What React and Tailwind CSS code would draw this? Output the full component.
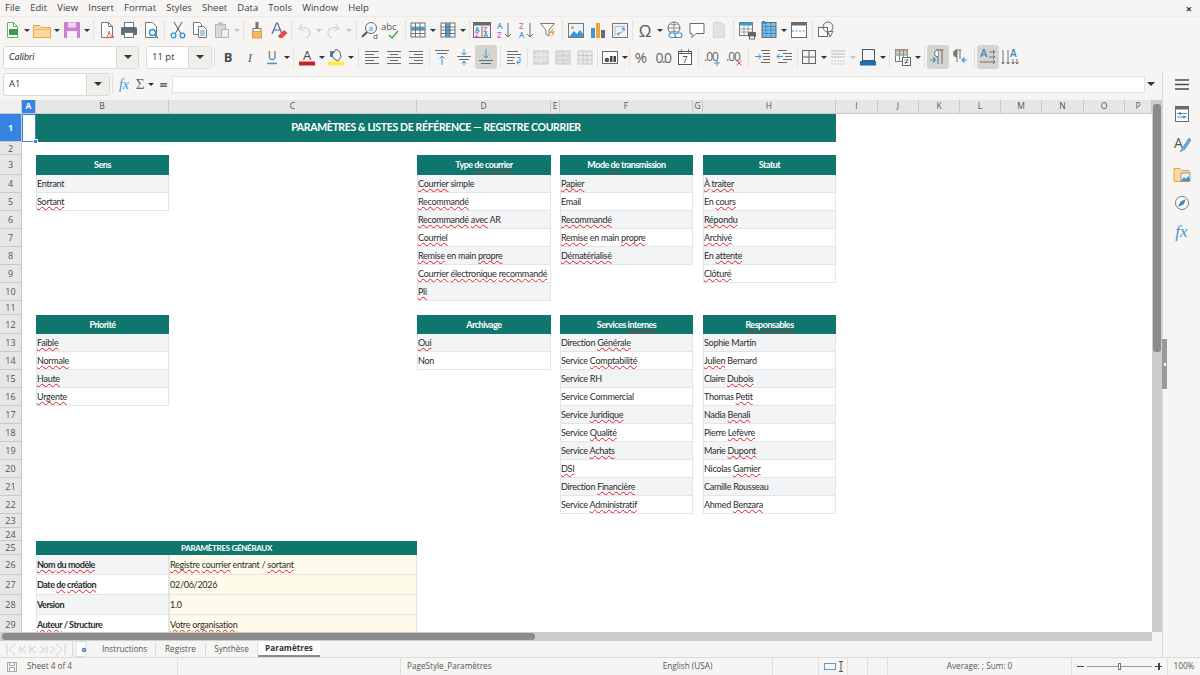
import React from 'react';

const menus = ['File', 'Edit', 'View', 'Insert', 'Format', 'Styles', 'Sheet', 'Data', 'Tools', 'Window', 'Help'];

const colHeaders = [
  ['A', 2], ['B', 3], ['C', 4], ['D', 5], ['E', 6], ['F', 7], ['G', 8], ['H', 9],
  ['I', 10], ['J', 11], ['K', 12], ['L', 13], ['M', 14], ['N', 15], ['O', 16], ['P', 17],
];

// ~word~ gets the red spell check line
const tables = [
  { col: 3, row: 3, title: 'Sens', items: ['Entrant', '~Sortant~'] },
  { col: 5, row: 3, title: 'Type ~de~ ~courrier~', items: ['~Courrier~ simple', '~Recommandé~', '~Recommandé~ ~avec~ AR', '~Courriel~', '~Remise~ en main ~propre~', '~Courrier~ ~électronique~ ~recommandé~', '~Pli~'] },
  { col: 7, row: 3, title: 'Mode ~de~ transmission', items: ['~Papier~', 'Email', '~Recommandé~', '~Remise~ en main ~propre~', '~Dématérialisé~'] },
  { col: 9, row: 3, title: 'Statut', items: ['~À~ ~traiter~', 'En ~cours~', '~Répondu~', '~Archivé~', 'En ~attente~', '~Clôturé~'] },
  { col: 3, row: 12, title: 'Priorité', items: ['~Faible~', '~Normale~', '~Haute~', '~Urgente~'] },
  { col: 5, row: 12, title: 'Archivage', items: ['~Oui~', 'Non'] },
  { col: 7, row: 12, title: 'Services ~internes~', items: ['Direction ~Générale~', 'Service ~Comptabilité~', 'Service RH', 'Service Commercial', 'Service ~Juridique~', 'Service ~Qualité~', 'Service ~Achats~', '~DSI~', 'Direction ~Financière~', 'Service ~Administratif~'] },
  { col: 9, row: 12, title: '~Responsables~', items: ['Sophie Martin', '~Julien~ Bernard', 'Claire ~Dubois~', 'Thomas ~Petit~', 'Nadia ~Benali~', 'Pierre ~Lefèvre~', 'Marie ~Dupont~', 'Nicolas ~Garnier~', 'Camille Rousseau', 'Ahmed ~Benzara~'] },
];

const params = [
  ['~Nom~ ~du~ ~modèle~', '~Registre~ ~courrier~ entrant / ~sortant~'],
  ['Date ~de~ ~création~', '02/06/2026'],
  ['Version', '1.0'],
  ['~Auteur~ / Structure', '~Votre~ ~organisation~'],
];

const Spell = ({ text }) => (
  <span>
    {text.split('~').map((part, i) =>
      i % 2 ? (
        <span key={i} className="underline decoration-wavy decoration-[#e01b24] decoration-[0.7px] underline-offset-[1px]">{part}</span>
      ) : (
        <span key={i}>{part}</span>
      )
    )}
  </span>
);

const G = ({ children }) => <g strokeWidth="1" fill="none">{children}</g>;

const lines = (xs, c = '#6b6b6b') => xs.map(([x1, y, x2], i) => <path key={i} d={`M${x1} ${y}H${x2}`} stroke={c} />);

const icons = {
  new: <G><path d="M6.5 3.5h6l4 4v11h-10z" fill="#fff" stroke="#5cb85c" /><rect x="8" y="10" width="9" height="6" fill="#3f9b4c" /><path d="M12.5 3.5v4h4" stroke="#5cb85c" /></G>,
  open: <G><path d="M2.5 6.5h6l2 2h9v10h-17z" fill="#fbd89f" stroke="#eea23f" /><path d="M2.5 10.5h17" stroke="#f5b65e" /></G>,
  save: <G><rect x="3" y="3" width="16" height="16" rx="1" fill="#c97fce" /><rect x="7" y="3.5" width="8" height="5" fill="#f3d9f4" /><rect x="6" y="12" width="10" height="7" fill="#f8eff8" /></G>,
  pdf: <G><path d="M5.5 3.5h7l4 4v11h-11z" fill="#fff" stroke="#777" /><path d="M12.5 3.5v4h4" stroke="#777" /><path d="M10 19c2-2 3-5 3-7 0 3 2 5 5 6-3 0-5 0-8 1z" stroke="#e0564f" /></G>,
  print: <G><rect x="6.5" y="3.5" width="9" height="5" fill="#fff" stroke="#6d7b86" /><rect x="3" y="8" width="16" height="8" rx="1.5" fill="#5f6d78" /><rect x="6.5" y="13.5" width="9" height="5" fill="#fff" stroke="#6d7b86" /></G>,
  preview: <G><path d="M5.5 3.5h7l4 4v11h-11z" fill="#fff" stroke="#777" /><circle cx="12.5" cy="13.5" r="3" stroke="#2f8fd0" strokeWidth="1.4" /><path d="M15 16l3 3" stroke="#2f8fd0" strokeWidth="1.5" /></G>,
  cut: <G><path d="M7 3l6.5 11M15 3L8.500 14" stroke="#555" /><circle cx="6.500" cy="16.500" r="2.300" stroke="#2f8fd0" strokeWidth="1.300" /><circle cx="15.500" cy="16.500" r="2.300" stroke="#2f8fd0" strokeWidth="1.300" /></G>,
  copy: <G><path d="M4.500 3.500h6l2 2v10h-8z" fill="#fff" stroke="#777" /><path d="M9.500 7.500h5l3 3v8h-8z" fill="#fff" stroke="#777" /><path d="M11 12h5M11 14h5M11 16h5" stroke="#4a9fd8" /></G>,
  paste: <G><rect x="4.500" y="5.500" width="10" height="13" fill="#d9d9d9" stroke="#b3b3b3" /><rect x="7" y="3.500" width="5" height="3" fill="#bdbdbd" /><rect x="10.500" y="10.500" width="7" height="8" fill="#efefef" stroke="#b3b3b3" /></G>,
  clone: <G><path d="M9.500 3h3v6h-3z" fill="#777" /><path d="M7 9.500h8v3H7z" fill="#f7f7f7" stroke="#777" /><path d="M6.500 12.500h9v6.500h-9z" fill="#f4b766" stroke="#e79a3c" /></G>,
  clear: <G><path d="M4 15l4.500-11h1L14 15M6 11h6" stroke="#3f6f94" strokeWidth="1.200" /><path d="M10 17l6-6 3.500 3-5 5h-3z" fill="#e5484d" /></G>,
  undo: <G><path d="M6 10l3-5M6 10l5 2M6 10c5-3 11-1 11 4 0 3-2 4-4 5" stroke="#d2d2d2" strokeWidth="1.200" /></G>,
  redo: <G><path d="M16 10l-3-5M16 10l-5 2M16 10c-5-3-11-1-11 4 0 3 2 4 4 5" stroke="#d2d2d2" strokeWidth="1.200" /></G>,
  find: <G><circle cx="12" cy="9" r="5.500" stroke="#6b6b6b" /><path d="M8 13l-5 5" stroke="#555" strokeWidth="2" /><text x="9.500" y="11.500" fontSize="8" fill="#2f8fd0" stroke="none" fontFamily="Open Sans">a</text><text x="14" y="20" fontSize="8" fill="#555" stroke="none" fontFamily="Open Sans">d</text></G>,
  spell: <G><text x="0" y="11" fontSize="9.500" fill="#555" stroke="none" fontFamily="Open Sans">abc</text><path d="M8 16l3 3 6-7" stroke="#43a55a" strokeWidth="1.500" /></G>,
  table: <G><rect x="4" y="4" width="14" height="14" fill="#fff" stroke="#6f6f6f" /><rect x="4" y="7.500" width="14" height="3.500" fill="#4ea3dd" /><path d="M4 11h14M4 14.500h14M8.500 4v14M13 4v14" stroke="#6f6f6f" /></G>,
  column: <G><rect x="4" y="4" width="14" height="14" fill="#fff" stroke="#6f6f6f" /><rect x="9" y="4" width="4" height="14" fill="#4ea3dd" /><path d="M4 8h14M4 11h14M4 14.500h14M8.500 4v14M13 4v14" stroke="#6f6f6f" /></G>,
  sort: <G><rect x="2.500" y="3.500" width="17" height="15" stroke="#6b6b6b" /><rect x="2.500" y="3.500" width="17" height="3" fill="#6b6b6b" /><path d="M11 7v11" stroke="#6b6b6b" /><text x="4" y="12.500" fontSize="6.500" fontWeight="700" fill="#3f93d3" stroke="none" fontFamily="Open Sans">A</text><text x="4" y="18" fontSize="6.500" fontWeight="700" fill="#d767cf" stroke="none" fontFamily="Open Sans">Z</text><text x="12.500" y="12.500" fontSize="6.500" fontWeight="700" fill="#d767cf" stroke="none" fontFamily="Open Sans">Z</text><text x="12.500" y="18" fontSize="6.500" fontWeight="700" fill="#3f93d3" stroke="none" fontFamily="Open Sans">A</text></G>,
  az: <G><text x="4" y="10" fontSize="8" fontWeight="600" fill="#3f93d3" stroke="none" fontFamily="Open Sans">A</text><text x="4" y="18.500" fontSize="8" fontWeight="600" fill="#d767cf" stroke="none" fontFamily="Open Sans">Z</text><path d="M15 4v14M12 15l3 3 3-3" stroke="#6b6b6b" /></G>,
  za: <G><text x="4" y="10" fontSize="8" fontWeight="600" fill="#d767cf" stroke="none" fontFamily="Open Sans">Z</text><text x="4" y="18.500" fontSize="8" fontWeight="600" fill="#3f93d3" stroke="none" fontFamily="Open Sans">A</text><path d="M15 4v14M12 15l3 3 3-3" stroke="#6b6b6b" /></G>,
  filter: <G><path d="M3.500 4.500h14l-5.500 6.500v6l-3-2v-4z" fill="#fff" stroke="#777" /><path d="M16 9l-3.500 5h3l-1.500 5 4-6.500h-2.500z" fill="#f0a33b" /></G>,
  image: <G><rect x="3.500" y="4.500" width="15" height="14" fill="#eaf4fb" stroke="#777" /><circle cx="7.500" cy="8.500" r="1.500" fill="#f2a53b" /><path d="M4 18l5-6 3 3 3-4 3 4v3z" fill="#3e96d6" /></G>,
  chart: <G><rect x="4" y="9" width="4" height="10" fill="#3e96d6" /><rect x="9" y="4" width="4" height="15" fill="#f0a33b" /><rect x="14" y="11" width="4" height="8" fill="#6b6b6b" /></G>,
  pivot: <G><rect x="3.500" y="4.500" width="15" height="14" fill="#f3f3f3" stroke="#777" /><path d="M6 7.500h10M6 7.500v9" stroke="#b5b5b5" /><path d="M8 15c3 0 6-2 7-6M15 9l-2.500 1M15 9l.5 2.500M8 15l2.500-1.500M8 15l2 1.500" stroke="#3e96d6" /></G>,
  omega: <G><text x="11" y="18" textAnchor="middle" fontSize="17" fill="#5f5f5f" stroke="none" fontFamily="Liberation Sans">Ω</text></G>,
  link: <G><circle cx="10" cy="9" r="6" stroke="#6b6b6b" /><path d="M4 9h12M10 3v12M6 5c2 1 6 1 8 0M6 13c2-1 6-1 8 0" stroke="#6b6b6b" strokeWidth=".7" /><rect x="5" y="14" width="7" height="4.500" rx="2.200" fill="#fff" stroke="#3e96d6" strokeWidth="1.200" /><rect x="11" y="14" width="7" height="4.500" rx="2.200" fill="#fff" stroke="#3e96d6" strokeWidth="1.200" /></G>,
  comment: <G><path d="M4 4.500h14v10H10l-4 4v-4H4z" fill="#fff" stroke="#6b6b6b" /></G>,
  note: <G><path d="M5.500 3.500h8l3 3v12h-11z" fill="#e2e2e2" stroke="#d5d5d5" /></G>,
  headers: <G><rect x="3.500" y="3.500" width="13" height="13" fill="#fff" stroke="#777" /><rect x="3.500" y="3.500" width="13" height="3" fill="#3e96d6" /><path d="M3.500 10h13M3.500 13h13M8 6v11M12 6v11" stroke="#9a9a9a" /><rect x="12" y="13" width="8" height="5" rx="1" fill="#666" /><rect x="13.500" y="17" width="5" height="3" fill="#fff" stroke="#666" /></G>,
  freeze: <G><rect x="4" y="3.500" width="14" height="15" fill="#7dbbe6" stroke="#5f6d78" /><path d="M4 7.500h14M4 11h14M4 14.500h14M8 3.500v15M13 3.500v15" stroke="#2f6f9f" strokeDasharray="1.500 1" /><rect x="4" y="2" width="3" height="3" fill="#2f8fd0" /></G>,
  split: <G><rect x="3.500" y="3.500" width="15" height="15" fill="#fff" stroke="#6b6b6b" /><rect x="3.500" y="3.500" width="15" height="3" fill="#6b6b6b" /><path d="M4 12h14" stroke="#3e96d6" strokeDasharray="2 1.500" /></G>,
  shapes: <G><rect x="3.500" y="8.500" width="9" height="9" fill="#fff" stroke="#6b6b6b" /><circle cx="13" cy="8" r="5" stroke="#6b6b6b" /><path d="M13 13l5-1-3 6z" fill="#fff" stroke="#6b6b6b" /></G>,
  bold: <text x="11" y="16" textAnchor="middle" fontSize="13" fontWeight="700" fill="#4d4d4d" fontFamily="Open Sans">B</text>,
  italic: <text x="11" y="16" textAnchor="middle" fontSize="13" fontStyle="italic" fill="#5f5f5f" fontFamily="Liberation Serif">I</text>,
  under: <G><text x="11" y="14" textAnchor="middle" fontSize="12" fill="#5f5f5f" fontFamily="Open Sans">U</text><path d="M6 17.500h10" stroke="#3e96d6" strokeWidth="1.500" /></G>,
  fontColor: <G><text x="11" y="14" textAnchor="middle" fontSize="13" fill="#444" fontFamily="Open Sans">A</text><rect x="3" y="15.500" width="16" height="4" fill="#c9211e" /></G>,
  bgColor: <G><rect x="5" y="5" width="6" height="6" fill="#3e7fb5" /><path d="M11 3l4 3 1 5-3 4-4-2-2-4z" fill="#f6f6f6" stroke="#666" /><rect x="3" y="15.500" width="16" height="4" fill="#ffeb3b" /></G>,
  left: <G>{lines([[4, 5.5, 18], [4, 8.5, 13], [4, 11.5, 18], [4, 14.5, 13], [4, 17.5, 18]])}</G>,
  center: <G>{lines([[4, 5.5, 18], [7, 8.5, 15], [4, 11.5, 18], [7, 14.5, 15], [4, 17.5, 18]])}</G>,
  right: <G>{lines([[4, 5.5, 18], [9, 8.5, 18], [4, 11.5, 18], [9, 14.5, 18], [4, 17.5, 18]])}</G>,
  top: <G>{lines([[4, 4.5, 18], [6, 7.5, 16]])}<path d="M11 19v-9M8.500 12.500L11 10l2.500 2.500" stroke="#3e96d6" /></G>,
  middle: <G>{lines([[4, 10.5, 18], [6, 13.5, 16]])}<path d="M11 3v6M8.500 6.500L11 9l2.500-2.500M11 19v-4M8.500 17.500L11 15l2.500 2.500" stroke="#3e96d6" /></G>,
  bottom: <G>{lines([[4, 14.5, 18], [6, 17.500, 16]])}<path d="M11 3v9M8.500 9.500L11 12l2.500-2.500" stroke="#3e96d6" /></G>,
  wrap: <G>{lines([[4, 5.5, 15], [4, 8.5, 18], [4, 11.5, 12], [4, 14.5, 10], [4, 17.5, 12]])}<path d="M14 11.500h3v5h-3M15.500 14.500l-2 2 2 2" stroke="#3e96d6" /></G>,
  merge: <G><rect x="4" y="5" width="14" height="13" fill="#dedede" stroke="#c4c4c4" /><path d="M4 9h14M4 14h14M11 5v4M11 14v4" stroke="#f0f0f0" /></G>,
  mergeB: <G><rect x="4" y="5" width="14" height="13" fill="#e2e2e2" stroke="#c8c8c8" /><path d="M4 10h14M4 14h14M11 5v5M11 14v4" stroke="#c8c8c8" /></G>,
  mergeC: <G><rect x="4" y="5" width="14" height="13" fill="#ebebeb" stroke="#c8c8c8" /><path d="M4 9.500h14M4 14h14M9 5v13M13 5v13" stroke="#c8c8c8" /></G>,
  currency: <G><rect x="3.500" y="5.500" width="15" height="12" fill="#fff" stroke="#6b6b6b" /><circle cx="8" cy="14" r="2.300" fill="#555" /><rect x="11" y="10" width="2.500" height="6" fill="#444" /><rect x="14.500" y="10" width="2.500" height="6" fill="#444" /></G>,
  percent: <text x="11" y="17" textAnchor="middle" fontSize="15" fill="#5f5f5f" fontFamily="Open Sans">%</text>,
  number: <text x="11" y="16.500" textAnchor="middle" fontSize="14" letterSpacing="-1.500" fill="#666" fontFamily="Open Sans">0.0</text>,
  date: <G><rect x="4.500" y="5.500" width="13" height="13" fill="#fff" stroke="#555" /><path d="M4.500 5.500h13v2h-13zM7.500 3.500v3M14.500 3.500v3" stroke="#555" /><text x="11" y="17" textAnchor="middle" fontSize="9" fill="#333" stroke="none" fontFamily="Open Sans">7</text></G>,
  addDec: <G><text x="10" y="15" textAnchor="middle" fontSize="12" letterSpacing="-1" fill="#666" stroke="none" fontFamily="Open Sans">.00</text><path d="M16 14v6M13 17h6" stroke="#3e96d6" /></G>,
  delDec: <G><text x="10" y="15" textAnchor="middle" fontSize="12" letterSpacing="-1" fill="#666" stroke="none" fontFamily="Open Sans">.00</text><path d="M13.500 14.500l5 5M18.500 14.500l-5 5" stroke="#e0564f" /></G>,
  indent: <G>{lines([[9, 4.5, 18], [11, 7.5, 18], [11, 10.5, 18], [11, 13.5, 18], [9, 16.5, 18]])}<path d="M3 10.500h6M6.500 8L9 10.500 6.500 13" stroke="#3e96d6" /></G>,
  outdent: <G>{lines([[4, 4.5, 13], [4, 16.5, 13]])}{lines([[9, 7.5, 18], [11, 10.5, 18], [9, 13.5, 18]])}<path d="M9 10.500H3M5.500 8L3 10.500 5.500 13" stroke="#3e96d6" /></G>,
  borders: <G><rect x="4.500" y="4.500" width="13" height="13" stroke="#666" /><path d="M11 4.500v13M4.500 11h13" stroke="#666" /></G>,
  borderStyle: <G>{lines([[4, 5, 18], [4, 8, 18], [4, 11, 18]], '#bdbdbd')}<path d="M4 15h14M4 18h14" stroke="#c8c8c8" strokeDasharray="2 1" /></G>,
  borderColor: <G><rect x="5.500" y="3.500" width="12" height="11" fill="#f0f6fb" stroke="#555" /><rect x="3" y="15" width="16" height="4.500" fill="#1f6fb2" /></G>,
  cond: <G><rect x="3.500" y="3.500" width="12" height="12" fill="#fff" stroke="#777" /><path d="M3.500 3.500h12v3h-12z" fill="#d9a3a0" /><path d="M3.500 7h12v3h-12z" fill="#9fcf9f" /><path d="M7.500 3.500v12M11.500 3.500v12" stroke="#888" /><rect x="10.500" y="11.500" width="8" height="8" fill="#fff" stroke="#666" /><path d="M12.500 14h4M12.500 16.500h4M16 13l-3 5" stroke="#555" strokeWidth=".8" /></G>,
  ltr: <G><path d="M11 18V4M15 18V4M9.500 4h7" stroke="#666" /><path d="M11 4a3.500 3.500 0 000 7" fill="#fff" stroke="#666" /><path d="M3 14h5M6 11.500L8.500 14 6 16.500" stroke="#3e96d6" strokeWidth="1.200" /></G>,
  rtl: <G><path d="M8 16V4M11 13V4M6.500 4h6" stroke="#777" /><path d="M8 4a3.500 3.500 0 000 7" fill="#777" stroke="#777" /><path d="M18 14h-5M15.500 11.500L13 14l2.500 2.500" stroke="#3e96d6" strokeWidth="1.200" /></G>,
  txtDir: <G><text x="3" y="11" fontSize="11" fontWeight="600" fill="#3e86c3" stroke="none" fontFamily="Open Sans">A</text><path d="M12 6h6M16 4l2 2-2 2M12 11h6M16 9l2 2-2 2M3 16h15M16 14l2 2-2 2" stroke="#666" strokeWidth=".9" /></G>,
  vert: <G><text x="11" y="11" fontSize="10" fontWeight="600" fill="#3e86c3" stroke="none" fontFamily="Open Sans">A</text><path d="M4 4v14M2.500 16L4 18l1.500-2M9 4v14M7.500 16L9 18l1.500-2M14 13v5M12.500 16l1.500 2 1.500-2M18 13v5M16.500 16l1.500 2 1.500-2" stroke="#666" strokeWidth=".9" /></G>,
};

const row1 = ['new', 'a', 'open', 'a', 'save', 'a', 5, 'pdf', 'print', 'preview', 5, 'cut', 'copy', 'paste', 'f', 5, 'clone', 'clear', 3, 'undo', 'f', 'redo', 'f', 6, 'find', 'spell', 4, 'table', 'a', 'column', 'a', 4, 'sort', 'az', 'za', 'filter', 6, 'image', 'chart', 'pivot', 3, 'omega', 'a', 'link', 'comment', 'note', 6, 'headers', 'freeze', 'a', 'split', 5, 'shapes'];

const row2 = ['bold', 'italic', 'under', 'a', 5, 'fontColor', 'b', 'bgColor', 'a', 6, 'left', 'center', 'right', 4, 'top', 'middle', '*bottom', 6, 'wrap', 5, 'merge', 'mergeB', 'mergeC', 3, 'currency', 'a', 1, 'percent', 'number', 'date', 5, 'addDec', 'delDec', 7, 'indent', 'outdent', 2, 'borders', 'b', 'borderStyle', 'f', 'borderColor', 'a', 5, 'cond', 'a', 5, '*ltr', 'rtl', 6, '*txtDir', 'vert'];

const Arrow = ({ faint, narrow }) => (
  <span className={`flex justify-center ${narrow ? 'w-[7px]' : 'w-[8px]'}`}>
    <span className={`w-0 h-0 border-x-[3px] border-x-transparent border-t-[3px] ${faint ? 'border-t-[#c4c4c4]' : 'border-t-[#333]'}`} />
  </span>
);

const Tool = ({ item }) => {
  if (typeof item === 'number') {
    return (
      <span className="flex justify-center h-[20px]" style={{ width: item }}>
        <span className="w-px h-full bg-[#e4e2df]" />
      </span>
    );
  }
  if (item === 'a') return <Arrow />;
  if (item === 'b') return <Arrow narrow />;
  if (item === 'f') return <Arrow faint />;
  const active = item[0] === '*';
  return (
    <span className={`w-[22px] h-[24px] flex items-center justify-center rounded-[3px] ${active ? 'bg-[#d6d4d0]' : ''}`}>
      <svg viewBox="0 0 22 22" className="w-[22px] h-[22px]">{icons[active ? item.slice(1) : item]}</svg>
    </span>
  );
};

const ComboBox = ({ value, width, split, italic }) => (
  <div className={`flex h-[23px] border border-[#dcdad6] rounded-[3px] bg-white text-[#333] text-[9.5px] ${width}`}>
    <div className={`flex-1 flex items-center pl-[5px] ${italic ? 'italic font-["Lato",sans-serif]' : ''}`}>{value}</div>
    <div className={`flex items-center justify-center bg-[#f1efec] border-l border-[#dcdad6] rounded-r-[3px] ${split}`}>
      <span className="w-0 h-0 border-x-[4px] border-x-transparent border-t-[4px] border-t-[#333]" />
    </div>
  </div>
);

const SideIcon = ({ children }) => (
  <svg viewBox="0 0 22 22" className="w-[22px] h-[22px]" fill="none">{children}</svg>
);

const Cell = ({ col, row, span = 1, className, children }) => (
  <div className={className} style={{ gridColumn: `${col} / span ${span}`, gridRow: row + 1 }}>
    {children}
  </div>
);

const bodyCell = 'flex items-center pt-[1px] border-x border-b border-[#e3e6e8] whitespace-nowrap overflow-hidden';
const headCell = 'flex items-center justify-center bg-[#0f766e] text-white font-bold whitespace-nowrap';

const Sheet = () => (
  <div className="w-[1152px] h-[532px] overflow-hidden bg-white font-['Lato',sans-serif] text-[9px] tracking-[-0.27px] text-[#2b2b2b]">
    <div className="relative grid grid-cols-[22px_14px_133px_248px_134px_9px_133px_10px_133px_42px_41px_41px_41px_41px_42px_41px_27px] grid-rows-[14px_28px_13px_20px_18px_18px_18px_18px_18px_18px_18px_14px_19px_18px_18px_18px_18px_18px_18px_18px_18px_18px_18px_14px_13px_14px_20px_20px_20px_20px]">
      <div className="bg-[#f0efed] border-b border-r border-[#c9c9c9]" />
      {colHeaders.map(([name, col]) => (
        <div
          key={name}
          className={`flex items-center justify-center border-b border-r border-[#c9c9c9] font-['Open_Sans',sans-serif] text-[8.5px] tracking-normal ${name === 'A' ? 'bg-[#3584e4] text-white font-bold' : 'bg-[#e6e6e6] text-[#555]'}`}
          style={{ gridColumn: col, gridRow: 1 }}
        >
          {name}
        </div>
      ))}
      {Array.from({ length: 29 }, (_, i) => i + 1).map((r) => (
        <Cell
          key={r}
          col={1}
          row={r}
          className={`flex items-center justify-center pt-[1px] border-b border-r border-[#c9c9c9] font-['Open_Sans',sans-serif] text-[9px] tracking-normal ${r === 1 ? 'bg-[#3584e4] text-white font-bold' : 'bg-[#e6e6e6] text-[#555]'}`}
        >
          {r}
        </Cell>
      ))}
      <Cell col={2} row={1} className="relative border border-[#3584e4]">
        <span className="absolute right-[-3px] bottom-[-3px] w-[5px] h-[5px] bg-[#3584e4] border border-white" />
      </Cell>
      <Cell col={3} row={1} span={7} className={`${headCell} text-[10.5px] tracking-[-0.35px]`}>
        PARAMÈTRES &amp; LISTES DE RÉFÉRENCE — REGISTRE COURRIER
      </Cell>
      {tables.map((t) => (
        <React.Fragment key={t.title}>
          <Cell col={t.col} row={t.row} className={`${headCell} tracking-[-0.5px]`}><Spell text={t.title} /></Cell>
          {t.items.map((item, i) => (
            <Cell key={item} col={t.col} row={t.row + i + 1} className={`${bodyCell} ${i % 2 ? 'bg-white' : 'bg-[#f3f4f6]'}`}>
              <Spell text={item} />
            </Cell>
          ))}
        </React.Fragment>
      ))}
      <Cell col={3} row={25} span={2} className={`${headCell} text-[8px] tracking-[-0.3px]`}>PARAMÈTRES GÉNÉRAUX</Cell>
      {params.map(([label, value], i) => (
        <React.Fragment key={label}>
          <Cell col={3} row={26 + i} className={`${bodyCell} font-bold tracking-[-0.45px] ${i % 2 ? 'bg-white' : 'bg-[#f3f4f6]'}`}>
            <Spell text={label} />
          </Cell>
          <Cell col={4} row={26 + i} className={`${bodyCell} bg-[#fffbeb]`}>
            <Spell text={value} />
          </Cell>
        </React.Fragment>
      ))}
    </div>
  </div>
);

const statusSeg = 'flex items-center h-full border-r border-[#e2e0dd]';

export default function App() {
  return (
    <div className="w-[1200px] h-[675px] flex flex-col overflow-hidden bg-[#f6f5f4] text-[#3d3d3d] font-['Open_Sans',sans-serif]">
      <div className="h-[17px] flex items-center pl-[5px] pr-[8px] gap-[10.2px] text-[9.5px] border-b border-[#ecebe9]">
        {menus.map((m) => <span key={m}>{m}</span>)}
        <span className="ml-auto text-[11px] font-bold text-[#333] leading-none">×</span>
      </div>
      <div className="h-[26px] flex items-center pl-[1px]">
        {row1.map((item, i) => <Tool key={i} item={item} />)}
      </div>
      <div className="h-[28px] flex items-center pl-[3px]">
        <ComboBox value="Calibri" width="w-[136px]" split="w-[22px]" italic />
        <div className="w-[7px]" />
        <ComboBox value="11 pt" width="w-[66px]" split="w-[23px]" />
        <Tool item={5} />
        {row2.map((item, i) => <Tool key={i} item={item} />)}
      </div>
      <div className="flex-1 flex min-h-0">
        <div className="w-[1162px] flex flex-col">
          <div className="h-[29px] flex items-center pl-[3px] pb-[3px]">
            <ComboBox value="A1" width="w-[107px]" split="w-[23px]" />
            <Tool item={5} />
            <span className="w-[18px] text-center italic text-[14px] text-[#3e96d6] font-['Liberation_Serif',serif]">fx</span>
            <span className="w-[14px] text-center text-[15px] text-[#666] font-['Liberation_Serif',serif]">Σ</span>
            <Arrow />
            <span className="w-[17px] text-center text-[14px] font-bold text-[#666]">=</span>
            <div className="w-[973px] h-[17px] bg-white border border-[#e4e2df]" />
            <span className="ml-[2px]"><span className="block w-0 h-0 border-x-[4px] border-x-transparent border-t-[4px] border-t-[#333]" /></span>
          </div>
          <div className="flex h-[532px]">
            <Sheet />
            <div className="w-[10px] h-full bg-[#cdcdcd] pt-[4px] px-[1px]">
              <div className="h-[248px] rounded-[3px] bg-[#8c8c8c]" />
            </div>
          </div>
          <div className="h-[9px] w-[1152px] bg-[#cdcdcd] py-[1px] pl-[2px]">
            <div className="h-full w-[533px] rounded-[3px] bg-[#8c8c8c]" />
          </div>
          <div className="h-[16px] flex items-stretch text-[8.2px] text-[#555]">
            <div className="w-[73px] pl-[6px] flex items-center border-r border-[#dcdad6]">
              <svg viewBox="0 0 60 13" className="w-[60px] h-[13px]" fill="none" stroke="#d0d0d0">
                <path d="M1 1v11M9 1L3 6.500 9 12M14 3v7M20 3l-5 3.500 5 3.500M24 3v7M30 3l-5 3.500 5 3.500M34 3l5 3.500-5 3.500M41 3v7M44 3l5 3.500-5 3.500M50 1l6 5.500-6 5.500M59 1v11" />
              </svg>
            </div>
            <div className="w-[29px] flex items-center pl-[2px]">
              <svg viewBox="0 0 15 16" className="w-[15px] h-[16px]" fill="none">
                <path d="M1 .5h9l1 1v14H1z" fill="#fff" stroke="#dcdcdc" />
                <circle cx="9" cy="9" r="2.200" fill="#3f7fc1" />
                <circle cx="9" cy="9" r=".8" fill="#fff" />
              </svg>
            </div>
            <div className="w-[54px] flex items-center border-r border-[#dcdad6] my-[2px]">Instructions</div>
            <div className="w-[50px] flex items-center justify-center border-r border-[#dcdad6] my-[2px]">Registre</div>
            <div className="w-[52px] flex items-center justify-center border-r border-[#dcdad6] my-[2px]">Synthèse</div>
            <div className="w-[62px] flex items-center justify-center bg-white font-bold text-[#333] border-b-2 border-[#8c8c8c]">Paramètres</div>
          </div>
        </div>
        <div className="relative w-[38px] border-l border-[#dcdad6] flex flex-col items-center">
          <div className="absolute left-[-1px] top-[268px] w-[5px] h-[50px] bg-[#9a9a9a] flex items-center justify-center">
            <span className="w-[2px] h-[3px] bg-white" />
          </div>
          <div className="h-[28px] flex items-center"><SideIcon><path d="M4 6h14M4 10.500h14M4 15h14" stroke="#4a4a4a" strokeWidth="1.500" /></SideIcon></div>
          <div className="h-[30px] flex items-center"><SideIcon><rect x="4.500" y="3.500" width="13" height="15" fill="#fff" stroke="#6b6b6b" /><rect x="4.500" y="3.500" width="13" height="3" fill="#6b6b6b" /><path d="M6 10.500h10M6 14h10" stroke="#3e96d6" /><path d="M9 9v3M13 12.500v3" stroke="#555" /></SideIcon></div>
          <div className="h-[30px] flex items-center"><SideIcon><text x="3" y="15" fontSize="14" fill="#555" fontFamily="Open Sans">A</text><path d="M18 5l-6 9-3 5 5-3 6-9z" fill="#6ba9db" stroke="#3e86c3" strokeWidth=".6" /></SideIcon></div>
          <div className="h-[29px] flex items-center"><SideIcon><path d="M3 5.500h6l2 2h7v11H3z" fill="#fbd89f" stroke="#eea23f" /><rect x="10" y="10" width="9" height="8" fill="#eaf4fb" stroke="#777" strokeWidth=".7" /><path d="M10 18l3-4 2 2 2-3 2 3v2z" fill="#3e96d6" /></SideIcon></div>
          <div className="h-[29px] flex items-center"><SideIcon><circle cx="11" cy="11" r="6.500" fill="#fff" stroke="#777" /><path d="M15 7l-2.500 5.500L7 15l2.500-5.500z" fill="#3e86c3" /></SideIcon></div>
          <div className="h-[30px] flex items-center"><span className="italic text-[17px] text-[#3e96d6] font-['Liberation_Serif',serif]">fx</span></div>
        </div>
      </div>
      <div className="h-[18px] flex items-center border-t border-[#dcdad6] text-[8.2px] text-[#555]">
        <div className={`${statusSeg} w-[178px] pl-[6px] gap-[9px]`}>
          <svg viewBox="0 0 12 12" className="w-[12px] h-[12px]" fill="none" stroke="#a9a9a9"><path d="M1.500 1.500h9v9h-9zM3.500 1.500v3h5v-3M3.500 10.500v-4h5v4" /></svg>
          <span>Sheet 4 of 4</span>
        </div>
        <div className={`${statusSeg} w-[223px]`} />
        <div className={`${statusSeg} w-[202px] pl-[6px] !border-r-0`}>PageStyle_Paramètres</div>
        <div className={`${statusSeg} w-[170px] justify-center`}>English (USA)</div>
        <div className={`${statusSeg} w-[46px]`} />
        <div className={`${statusSeg} w-[29px] pl-[5px] gap-[2px]`}>
          <span className="w-[12px] h-[7px] border border-[#5a9bd0] bg-[#f4f8fb]" />
          <svg viewBox="0 0 6 11" className="w-[6px] h-[11px]" fill="none" stroke="#555"><path d="M1 .5h4M1 10.500h4M3 .5v10" /></svg>
        </div>
        <div className={`${statusSeg} w-[20px]`} />
        <div className={`${statusSeg} w-[20px]`} />
        <div className={`${statusSeg} w-[184px] justify-center`}>Average: ; Sum: 0</div>
        <div className={`${statusSeg} w-[96px] pl-[5px] gap-[3px]`}>
          <span className="w-[7px] h-[1.500px] bg-[#444]" />
          <div className="relative w-[65px] h-px bg-[#999] flex justify-center">
            <span className="absolute top-[-3px] w-[3px] h-[7px] border border-[#777] bg-white" />
          </div>
          <span className="relative w-[7px] h-[7px] flex items-center">
            <span className="w-full h-[1.500px] bg-[#444]" />
            <span className="absolute left-[3px] top-0 w-[1.500px] h-full bg-[#444]" />
          </span>
        </div>
        <div className="flex-1 text-center">100%</div>
      </div>
    </div>
  );
}
